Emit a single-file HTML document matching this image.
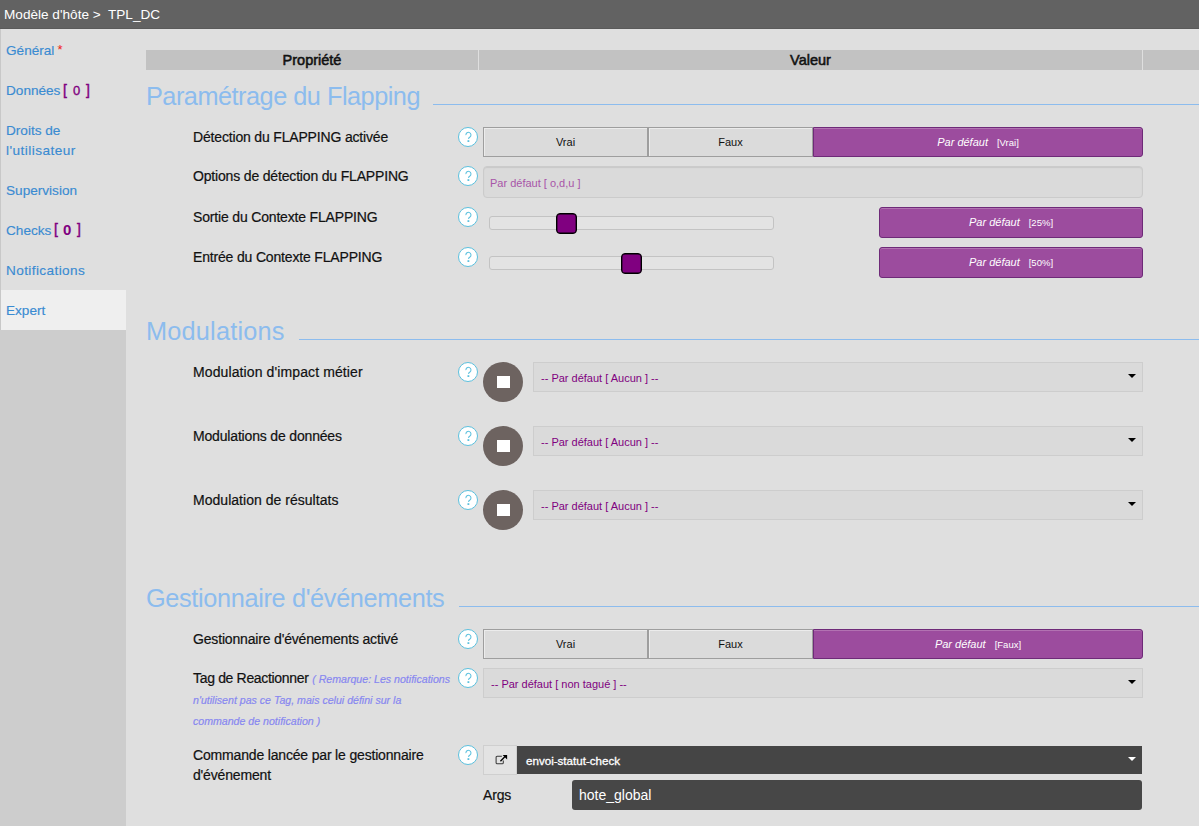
<!DOCTYPE html>
<html><head><meta charset="utf-8">
<style>
*{box-sizing:border-box}
html,body{margin:0;padding:0}
body{width:1199px;height:826px;overflow:hidden;background:#dfdfdf;font-family:"Liberation Sans",sans-serif;position:relative;color:#1a1a1a}
.a{position:absolute;white-space:nowrap}
#hdr{left:0;top:0;width:1199px;height:29px;background:#626262;border-bottom:1px solid #5a5a5a}
#hdrt{left:4px;top:5px;font-size:13.6px;color:#fff;line-height:20px}
#side{left:0;top:29px;width:126px;height:797px;background:#cdcdcd}
#sidetop{left:0;top:29px;width:126px;height:301px;background:#dfdfdf;border-left:1px solid #c8c8c8}
.nav{left:6px;font-size:13.6px;color:#3a8bd2;line-height:20px;-webkit-text-stroke-width:0.15px}
.cnt{color:#800080;font-weight:bold}
#expert{left:1px;top:290px;width:125px;height:40px;background:#efefef}
.th{top:50px;height:20px;background:#c2c2c2;font-weight:normal;-webkit-text-stroke:0.55px #111;font-size:14.5px;text-align:center;line-height:21px;color:#111}
.title{left:146px;font-size:25.3px;letter-spacing:-0.5px;color:#8cbcee;line-height:30px}
.tline{height:1px;background:#8cbcee;right:0}
.lbl{left:193px;font-size:14px;letter-spacing:-0.17px;line-height:20px;color:#111;-webkit-text-stroke-width:0.2px}
.help{left:458px;width:20px;height:20px;border-radius:50%;border:1px solid #5bc0de;background:#fff;color:#5bc0de;font-size:12.5px;text-align:center;line-height:20px}
.bg{top:0;height:30px;background:#dbdbdb;border:1px solid #9e9e9e;box-shadow:inset 1px 1px 0 #ececec;font-size:11px;text-align:center;line-height:28px;color:#111}
.pd{background:#9c4c9e;border:1px solid #6e2a78;box-shadow:inset 0 1px 0 #b272b2;color:#fff;border-radius:0 3px 3px 0}
.pd i{font-size:11px}
.pd span{font-size:9.5px;margin-left:9px}
.sbtn{left:879px;width:264px;height:31px;background:#9c4c9e;border:1px solid #6e2a78;box-shadow:inset 0 1px 0 #b272b2;color:#fff;border-radius:3px;text-align:center;line-height:29px;font-size:11px}
.sbtn i{font-size:11px}
.sbtn span{font-size:9.5px;margin-left:9px}
.track{left:489px;width:285px;height:14px;background:#e3e3e3;border:1px solid #c3c3c3;border-radius:3px}
.thumb{width:21px;height:21px;background:#800080;border:1px solid #000;box-shadow:inset 0 0 0 0.4px #000;border-radius:4px}
.sel{left:533px;width:610px;height:30px;background:#dadada;border:1px solid #cdcdcd;font-size:11px;color:#800080;line-height:30px;padding-left:7px}
.arr{position:absolute;right:6px;top:11px;width:0;height:0;border-left:4px solid transparent;border-right:4px solid transparent;border-top:4px solid #000}
.mod{left:483px;width:40px;height:40px;border-radius:50%;background:#6d6360}
.mod div{position:absolute;left:14px;top:14px;width:13px;height:12px;background:#fff}
</style></head><body>
<div class="a" id="hdr"></div>
<div class="a" id="hdrt">Modèle d'hôte &gt;&nbsp; TPL_DC</div>
<div class="a" id="side"></div>
<div class="a" id="sidetop"></div>
<div class="a" id="expert"></div>
<div class="a nav" style="top:41px">Général</div>
<div class="a" style="left:57.5px;top:43px;color:#f01818;font-size:13px;line-height:14px">*</div>
<div class="a nav" style="top:81px">Données</div>
<div class="a cnt" style="left:63px;top:80px;font-size:14px;line-height:20px;font-weight:normal;-webkit-text-stroke:0.45px #800080">[</div><div class="a cnt" style="left:73px;top:81px;font-size:13px;line-height:20px;font-weight:normal;-webkit-text-stroke:0.35px #800080">0</div><div class="a cnt" style="left:86px;top:80px;font-size:14px;line-height:20px;font-weight:normal;-webkit-text-stroke:0.45px #800080">]</div>
<div class="a nav" style="top:121px">Droits de<br><span style="letter-spacing:0.45px">l'utilisateur</span></div>
<div class="a nav" style="top:181px">Supervision</div>
<div class="a nav" style="top:221px">Checks</div>
<div class="a cnt" style="left:54px;top:219px;font-size:14px;line-height:20px;font-weight:normal;-webkit-text-stroke:0.45px #800080">[</div><div class="a cnt" style="left:63px;top:220px;font-size:15px;line-height:20px">0</div><div class="a cnt" style="left:77px;top:219px;font-size:14px;line-height:20px;font-weight:normal;-webkit-text-stroke:0.45px #800080">]</div>
<div class="a nav" style="top:261px;letter-spacing:0.4px">Notifications</div>
<div class="a nav" style="top:301px">Expert</div>

<div class="a th" style="left:146px;width:332px">Propriété</div>
<div class="a th" style="left:479px;width:663px">Valeur</div>
<div class="a th" style="left:1143px;width:56px"></div>

<!-- Section 1 -->
<div class="a title" style="top:81px">Paramétrage du Flapping</div>
<div class="a tline" style="left:433px;top:104px"></div>

<div class="a lbl" style="top:127px">Détection du FLAPPING activée</div>
<div class="a help" style="top:127px"><svg width="20" height="20" viewBox="0 0 20 20" style="position:absolute;left:-1px;top:-1px"><path d="M7.9 8.1A2.55 2.55 0 1 1 11.9 10.0Q10.6 10.8 10.5 11.9" fill="none" stroke="#5bc0de" stroke-width="1.05"/><rect x="9.5" y="13.2" width="1.8" height="1.8" fill="#5bc0de"/></svg></div>
<div class="a" style="left:483px;top:127px;width:660px;height:30px">
  <div class="a bg" style="left:0;width:165px">Vrai</div>
  <div class="a bg" style="left:165px;width:165px">Faux</div>
  <div class="a bg pd" style="left:330px;width:330px"><i>Par défaut</i><span>[Vrai]</span></div>
</div>

<div class="a lbl" style="top:166px">Options de détection du FLAPPING</div>
<div class="a help" style="top:166px"><svg width="20" height="20" viewBox="0 0 20 20" style="position:absolute;left:-1px;top:-1px"><path d="M7.9 8.1A2.55 2.55 0 1 1 11.9 10.0Q10.6 10.8 10.5 11.9" fill="none" stroke="#5bc0de" stroke-width="1.05"/><rect x="9.5" y="13.2" width="1.8" height="1.8" fill="#5bc0de"/></svg></div>
<div class="a" style="left:483px;top:166px;width:660px;height:32px;background:#dadada;border:1px solid #cbcbcb;border-radius:4px;box-shadow:inset 0 1px 1px rgba(0,0,0,.08);font-size:11px;color:#a855a8;line-height:32px;padding-left:6px">Par défaut [ o,d,u ]</div>

<div class="a lbl" style="top:207px">Sortie du Contexte FLAPPING</div>
<div class="a help" style="top:207px"><svg width="20" height="20" viewBox="0 0 20 20" style="position:absolute;left:-1px;top:-1px"><path d="M7.9 8.1A2.55 2.55 0 1 1 11.9 10.0Q10.6 10.8 10.5 11.9" fill="none" stroke="#5bc0de" stroke-width="1.05"/><rect x="9.5" y="13.2" width="1.8" height="1.8" fill="#5bc0de"/></svg></div>
<div class="a track" style="top:216px"></div>
<div class="a thumb" style="left:556px;top:213px"></div>
<div class="a sbtn" style="top:207px"><i>Par défaut</i><span>[25%]</span></div>

<div class="a lbl" style="top:247px">Entrée du Contexte FLAPPING</div>
<div class="a help" style="top:247px"><svg width="20" height="20" viewBox="0 0 20 20" style="position:absolute;left:-1px;top:-1px"><path d="M7.9 8.1A2.55 2.55 0 1 1 11.9 10.0Q10.6 10.8 10.5 11.9" fill="none" stroke="#5bc0de" stroke-width="1.05"/><rect x="9.5" y="13.2" width="1.8" height="1.8" fill="#5bc0de"/></svg></div>
<div class="a track" style="top:256px"></div>
<div class="a thumb" style="left:621px;top:253px"></div>
<div class="a sbtn" style="top:247px"><i>Par défaut</i><span>[50%]</span></div>

<!-- Section 2 -->
<div class="a title" style="top:316px;letter-spacing:0.2px">Modulations</div>
<div class="a tline" style="left:299px;top:339px"></div>

<div class="a lbl" style="top:362px;letter-spacing:0.11px">Modulation d'impact métier</div>
<div class="a help" style="top:362px"><svg width="20" height="20" viewBox="0 0 20 20" style="position:absolute;left:-1px;top:-1px"><path d="M7.9 8.1A2.55 2.55 0 1 1 11.9 10.0Q10.6 10.8 10.5 11.9" fill="none" stroke="#5bc0de" stroke-width="1.05"/><rect x="9.5" y="13.2" width="1.8" height="1.8" fill="#5bc0de"/></svg></div>
<div class="a mod" style="top:362px"><div></div></div>
<div class="a sel" style="top:362px">-- Par défaut [ Aucun ] --<div class="arr"></div></div>

<div class="a lbl" style="top:426px">Modulations de données</div>
<div class="a help" style="top:426px"><svg width="20" height="20" viewBox="0 0 20 20" style="position:absolute;left:-1px;top:-1px"><path d="M7.9 8.1A2.55 2.55 0 1 1 11.9 10.0Q10.6 10.8 10.5 11.9" fill="none" stroke="#5bc0de" stroke-width="1.05"/><rect x="9.5" y="13.2" width="1.8" height="1.8" fill="#5bc0de"/></svg></div>
<div class="a mod" style="top:426px"><div></div></div>
<div class="a sel" style="top:426px">-- Par défaut [ Aucun ] --<div class="arr"></div></div>

<div class="a lbl" style="top:490px;letter-spacing:0.03px">Modulation de résultats</div>
<div class="a help" style="top:490px"><svg width="20" height="20" viewBox="0 0 20 20" style="position:absolute;left:-1px;top:-1px"><path d="M7.9 8.1A2.55 2.55 0 1 1 11.9 10.0Q10.6 10.8 10.5 11.9" fill="none" stroke="#5bc0de" stroke-width="1.05"/><rect x="9.5" y="13.2" width="1.8" height="1.8" fill="#5bc0de"/></svg></div>
<div class="a mod" style="top:490px"><div></div></div>
<div class="a sel" style="top:490px">-- Par défaut [ Aucun ] --<div class="arr"></div></div>

<!-- Section 3 -->
<div class="a title" style="top:583px;letter-spacing:-0.35px">Gestionnaire d'événements</div>
<div class="a tline" style="left:459px;top:606px"></div>

<div class="a lbl" style="top:629px">Gestionnaire d'événements activé</div>
<div class="a help" style="top:629px"><svg width="20" height="20" viewBox="0 0 20 20" style="position:absolute;left:-1px;top:-1px"><path d="M7.9 8.1A2.55 2.55 0 1 1 11.9 10.0Q10.6 10.8 10.5 11.9" fill="none" stroke="#5bc0de" stroke-width="1.05"/><rect x="9.5" y="13.2" width="1.8" height="1.8" fill="#5bc0de"/></svg></div>
<div class="a" style="left:483px;top:629px;width:660px;height:30px">
  <div class="a bg" style="left:0;width:165px">Vrai</div>
  <div class="a bg" style="left:165px;width:165px">Faux</div>
  <div class="a bg pd" style="left:330px;width:330px"><i>Par défaut</i><span>[Faux]</span></div>
</div>

<div class="a lbl" style="top:668px"><span style="letter-spacing:-0.33px">Tag de Reactionner</span> <i style="color:#8888f0;font-size:10.6px;letter-spacing:0">( Remarque: Les notifications</i></div>
<div class="a lbl" style="top:690px;color:#8888f0;font-size:10.6px;letter-spacing:0;font-style:italic">n'utilisent pas ce Tag, mais celui défini sur la</div>
<div class="a lbl" style="top:711px;color:#8888f0;font-size:10.6px;letter-spacing:0;font-style:italic">commande de notification )</div>
<div class="a help" style="top:668px"><svg width="20" height="20" viewBox="0 0 20 20" style="position:absolute;left:-1px;top:-1px"><path d="M7.9 8.1A2.55 2.55 0 1 1 11.9 10.0Q10.6 10.8 10.5 11.9" fill="none" stroke="#5bc0de" stroke-width="1.05"/><rect x="9.5" y="13.2" width="1.8" height="1.8" fill="#5bc0de"/></svg></div>
<div class="a sel" style="left:483px;width:660px;top:668px">-- Par défaut [ non tagué ] --<div class="arr"></div></div>

<div class="a lbl" style="top:745px">Commande lancée par le gestionnaire</div>
<div class="a lbl" style="top:765px">d'événement</div>
<div class="a help" style="top:745px"><svg width="20" height="20" viewBox="0 0 20 20" style="position:absolute;left:-1px;top:-1px"><path d="M7.9 8.1A2.55 2.55 0 1 1 11.9 10.0Q10.6 10.8 10.5 11.9" fill="none" stroke="#5bc0de" stroke-width="1.05"/><rect x="9.5" y="13.2" width="1.8" height="1.8" fill="#5bc0de"/></svg></div>
<div class="a" style="left:483px;top:745px;width:34px;height:30px;background:#e3e3e3;border:1px solid #cfcfcf"></div>
<svg class="a" style="left:494px;top:754px" width="14" height="12" viewBox="0 0 14 12"><path d="M7.9 2.3H3.2Q2.1 2.3 2.1 3.4V8.7Q2.1 9.8 3.2 9.8H8.2Q9.3 9.8 9.3 8.7V6.6" fill="none" stroke="#3a3a3a" stroke-width="1.05"/><path d="M6.4 7.3L11.6 2.1" stroke="#000" stroke-width="1.35"/><path d="M8.6 0.9H13.1V5.4Z" fill="#000"/></svg>
<div class="a" style="left:517px;top:746px;width:625px;height:28px;background:#454545;color:#fff;font-size:11.6px;-webkit-text-stroke:0.3px #fff;line-height:30px;padding-left:9px">envoi-statut-check<div class="arr" style="border-top-color:#fff;top:11px"></div></div>
<div class="a lbl" style="left:483px;top:785px">Args</div>
<div class="a" style="left:572px;top:780px;width:570px;height:30px;background:#474747;border-radius:3px;color:#fff;font-size:14px;line-height:30px;padding-left:7px">hote_global</div>
</body></html>
